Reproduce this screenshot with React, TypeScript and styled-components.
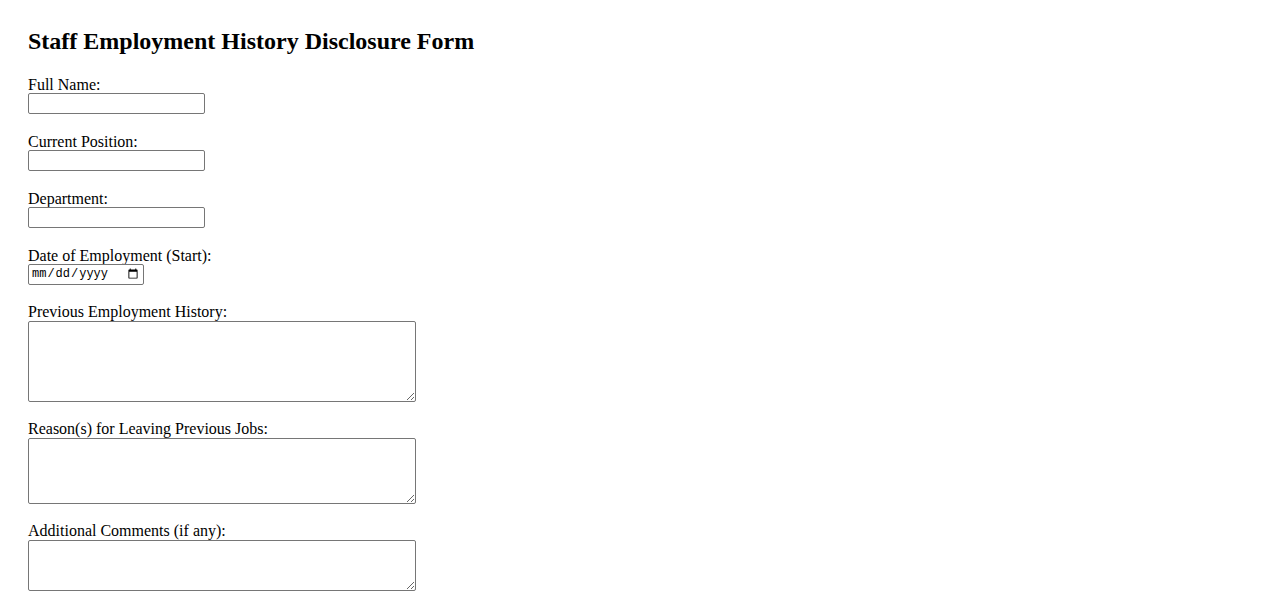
import React from "react";
import styled, { createGlobalStyle } from "styled-components";

const Global = createGlobalStyle`
  html, body { background: #fff; }
  body {
    margin: 8px;
    padding: 0 20px;
    font-family: "Liberation Serif", "Times New Roman", serif;
    font-size: 16px;
    color: #000;
  }
`;

const Title = styled.h2`
  font-size: 24px;
  font-weight: bold;
  margin: 20px 0 20.9px;
  line-height: normal;
`;

const Form = styled.form`
  display: flex;
  flex-direction: column;
  align-items: flex-start;
`;

const Field = styled.div`
  display: flex;
  flex-direction: column;
  align-items: flex-start;
  margin-bottom: 17.9px;
`;

const Label = styled.label`
  display: block;
  line-height: normal;
`;

const TextInput = styled.input`
  box-sizing: border-box;
  width: 177px;
  height: 21px;
  margin: -1px 0 1px;
  font-family: "Liberation Sans", Arial, sans-serif;
  font-size: 13.33px;
  border: 1px solid #767676;
  border-radius: 2px;
  padding: 1px 2px;
  background: #fff;
`;

const DateInput = styled.input`
  box-sizing: border-box;
  width: 116px;
  height: 21px;
  margin: -1px 0 1px;
  font-family: "Liberation Mono", "Courier New", monospace;
  font-size: 12px;
  border: 1px solid #767676;
  border-radius: 2px;
  padding: 1px 2px;
  background: #fff;
`;

const Area = styled.textarea<{ $h: number }>`
  box-sizing: border-box;
  width: 388px;
  height: ${(p) => p.$h}px;
  margin: 0;
  font-family: "Liberation Mono", monospace;
  font-size: 13.33px;
  border: 1px solid #767676;
  border-radius: 2px;
  padding: 2px;
  background: #fff;
  resize: both;
`;

export default function App() {
  return (
    <>
      <Global />
      <Title>Staff Employment History Disclosure Form</Title>
      <Form onSubmit={(e) => e.preventDefault()}>
        <Field>
          <Label htmlFor="fullName">Full Name:</Label>
          <TextInput id="fullName" type="text" />
        </Field>
        <Field>
          <Label htmlFor="position">Current Position:</Label>
          <TextInput id="position" type="text" />
        </Field>
        <Field>
          <Label htmlFor="department">Department:</Label>
          <TextInput id="department" type="text" />
        </Field>
        <Field>
          <Label htmlFor="start">Date of Employment (Start):</Label>
          <DateInput id="start" type="date" />
        </Field>
        <Field>
          <Label htmlFor="history">Previous Employment History:</Label>
          <Area id="history" $h={81} />
        </Field>
        <Field>
          <Label htmlFor="reasons">Reason(s) for Leaving Previous Jobs:</Label>
          <Area id="reasons" $h={66} />
        </Field>
        <Field>
          <Label htmlFor="comments">Additional Comments (if any):</Label>
          <Area id="comments" $h={51} />
        </Field>
      </Form>
    </>
  );
}
